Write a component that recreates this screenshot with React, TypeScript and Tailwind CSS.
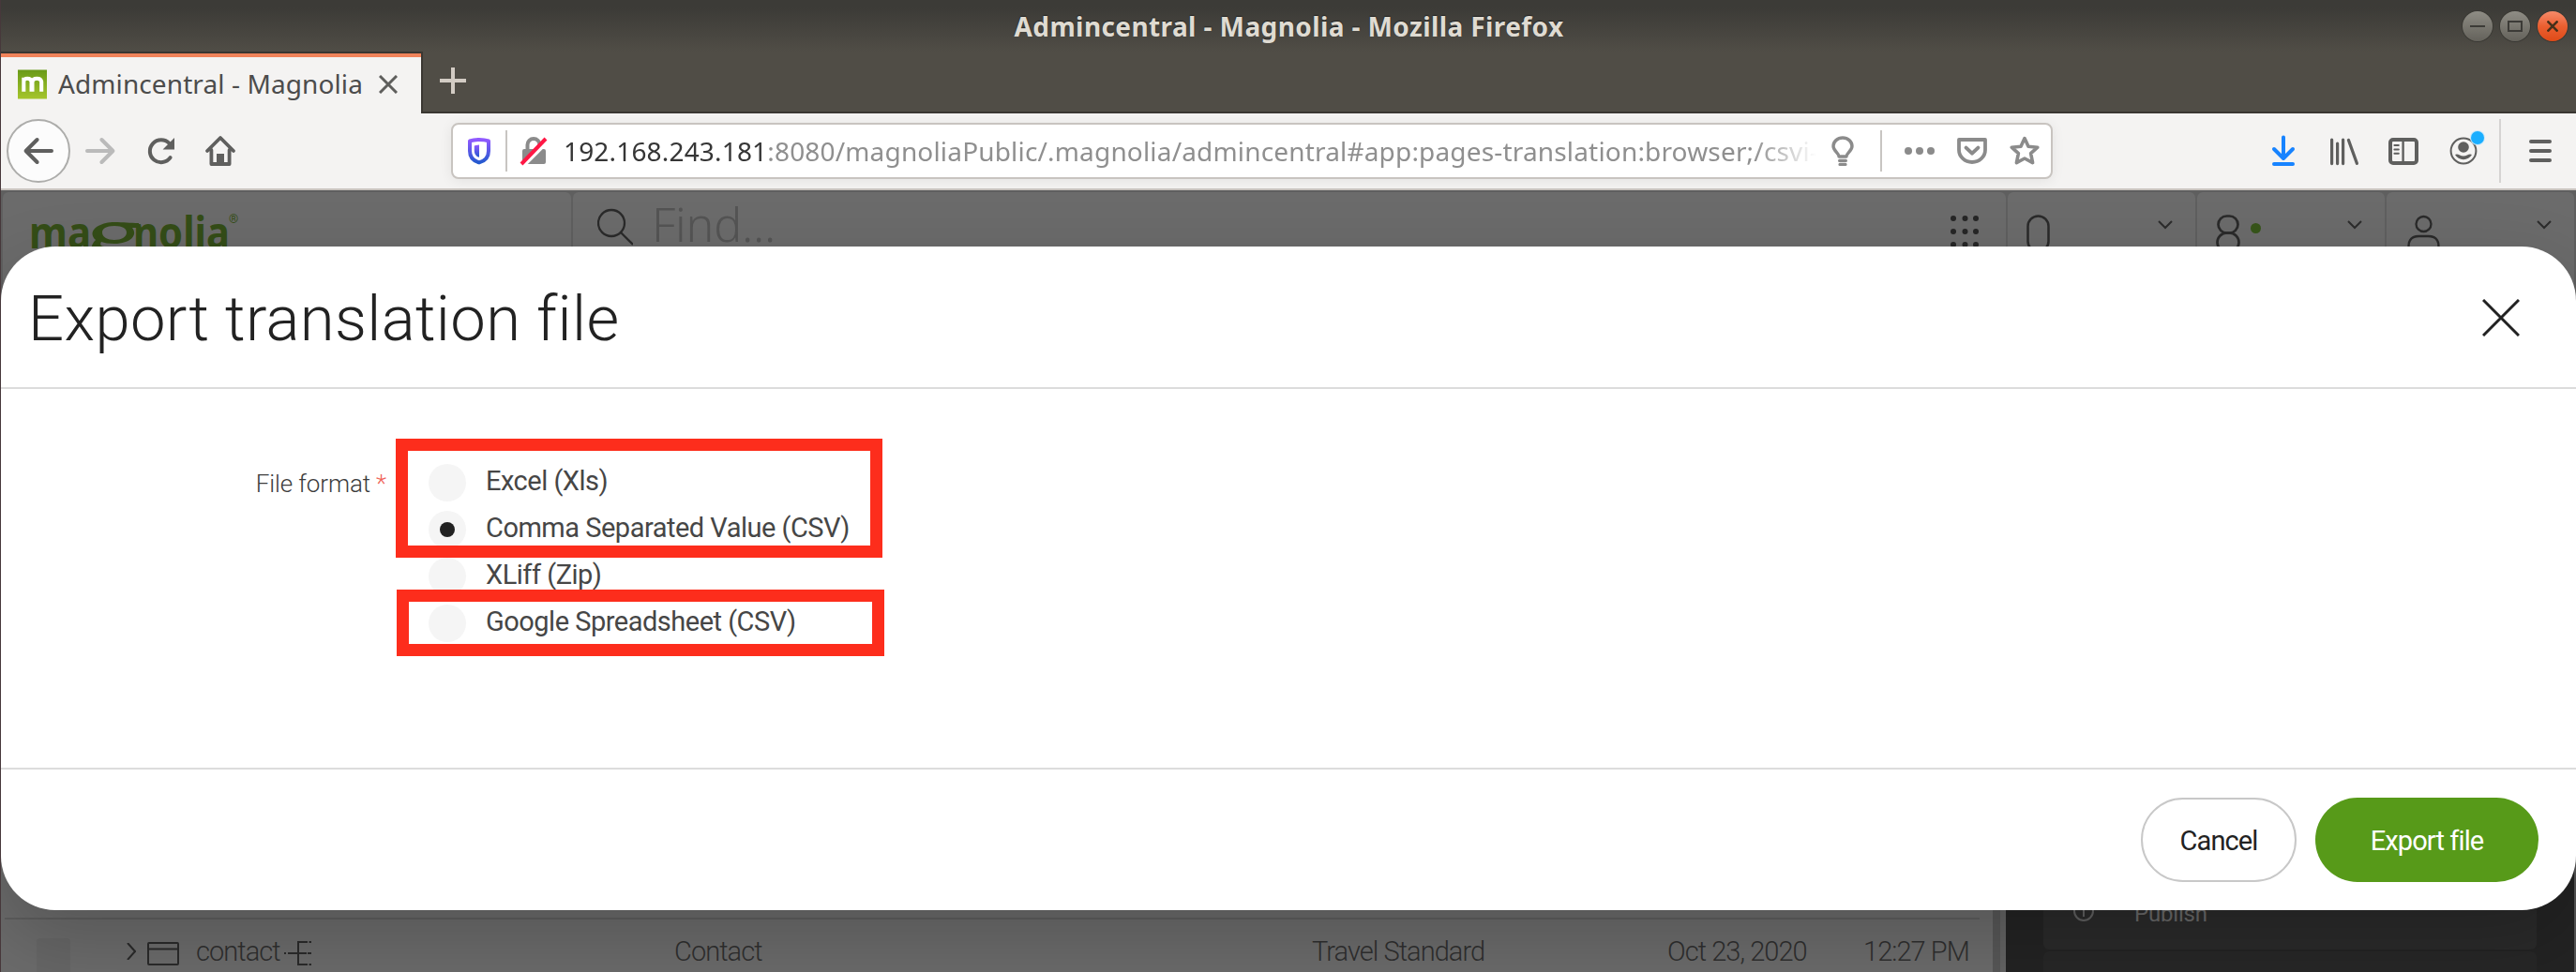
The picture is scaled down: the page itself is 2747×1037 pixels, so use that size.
import React from 'react';

type IconProps = { children: React.ReactNode; className?: string };

/* 16-unit toolbar icon drawn at 32px */
const Icon = ({ children, className = '' }: IconProps) => (
  <svg
    viewBox="0 0 16 16"
    fill="none"
    stroke="currentColor"
    strokeWidth="2"
    strokeLinecap="round"
    strokeLinejoin="round"
    className={`h-8 w-8 shrink-0 overflow-visible ${className}`}
  >
    {children}
  </svg>
);

const TitleBar = () => (
  <div className="flex h-[55px] shrink-0 items-center bg-gradient-to-b from-[#3c3b37] from-15% to-[#504d46]">
    <div className="flex-1" />
    <div className="pl-[10px] font-['Noto_Sans',sans-serif] text-[28px] leading-[52px] font-bold tracking-[0.4px] whitespace-nowrap text-[#dfdbd2] [text-shadow:0_-1px_1px_#222]">
      Admincentral - Magnolia - Mozilla Firefox
    </div>
    <div className="flex flex-1 justify-end gap-2 pr-[9px]">
      <div className="flex h-8 w-8 items-center justify-center rounded-full bg-gradient-to-b from-[#8f8d85] to-[#64625b] shadow-[0_0_0_1px_#3a3934]">
        <div className="mt-px h-[2px] w-4 bg-[#3c3b37]" />
      </div>
      <div className="flex h-8 w-8 items-center justify-center rounded-full bg-gradient-to-b from-[#8f8d85] to-[#64625b] shadow-[0_0_0_1px_#3a3934]">
        <div className="h-3 w-4 border-2 border-[#3c3b37]" />
      </div>
      <div className="flex h-8 w-8 items-center justify-center rounded-full bg-gradient-to-b from-[#f58a68] via-[#ea5f30] to-[#df4a16] shadow-[0_0_0_1px_#3a3934]">
        <svg viewBox="0 0 12 12" className="h-3 w-3" stroke="#46301a" strokeWidth="2.6">
          <path d="M.5.5l11 11M11.5.5l-11 11" />
        </svg>
      </div>
    </div>
  </div>
);

const TabStrip = () => (
  <div className="flex h-[66px] shrink-0 bg-[#504d46]">
    <div className="flex w-[450px] border-t-2 border-r-2 border-[#3a3732]">
      <div className="flex w-[448px] items-center border-t-4 border-[#f0835a] bg-[#f4f3f2] pl-[18px]">
        <svg viewBox="0 0 32 32" className="-mt-0.5 h-8 w-[31px] shrink-0">
          <defs>
            <linearGradient id="fav" x2="0" y2="1">
              <stop stopColor="#699a19" />
              <stop offset="1" stopColor="#a5c52c" />
            </linearGradient>
          </defs>
          <rect width="32" height="32" fill="url(#fav)" />
          <path
            d="M6.500 24V8.500M6.500 24V13q0-3.500 4-3.500t4.500 3.500V24M16 24V13q.5-3.500 5-3.500t5 3.500V24"
            fill="none"
            stroke="#fff"
            strokeWidth="4.200"
          />
        </svg>
        <span className="mb-[5px] ml-3 font-['Noto_Sans',sans-serif] text-[28px] leading-[40px] tracking-[0.1px] whitespace-nowrap text-[#4c4c4c]">
          Admincentral - Magnolia
        </span>
        <svg viewBox="0 0 20 20" className="mb-0.5 ml-[17px] h-5 w-5 shrink-0" stroke="#5e5e5c" strokeWidth="3">
          <path d="M1 1l18 18M19 1L1 19" />
        </svg>
      </div>
    </div>
    <div className="flex flex-1 items-center border-b-2 border-[#3a3732] pl-[18px]">
      <svg viewBox="0 0 28 28" className="mb-0.5 h-7 w-7" stroke="#d3ccc4" strokeWidth="4">
        <path d="M14 0v28M0 14h28" />
      </svg>
    </div>
  </div>
);

const AddressBar = () => (
  <div className="ml-[230px] flex h-[60px] w-[1708px] shrink-0 items-center rounded-lg border-2 border-[#c8c4c0] bg-white text-[#8b8b8b] shadow-[0_2px_14px_rgba(0,0,0,0.07)]">
    <svg viewBox="0 0 16 16" className="ml-3 h-8 w-8 shrink-0" fill="none">
      <defs>
        <linearGradient id="shield" x2="0" y2="1">
          <stop stopColor="#9059ff" />
          <stop offset="1" stopColor="#2459cf" />
        </linearGradient>
      </defs>
      <path
        d="M8 2c2 0 3.800.3 5 .7V8c0 3.500-2 5.400-5 6.200C5 13.400 3 11.500 3 8V2.700C4.200 2.300 6 2 8 2z"
        stroke="url(#shield)"
        strokeWidth="2"
        strokeLinejoin="round"
      />
      <path d="M8 4.800v6.600C6.200 10.700 5.400 9.700 5.400 8V5.200Q6.500 4.900 8 4.800z" fill="url(#shield)" />
    </svg>
    <div className="ml-3 h-11 w-0.5 bg-[#c8c5c2]" />
    <svg viewBox="0 0 32 32" className="ml-3 h-8 w-8 shrink-0" fill="none">
      <path d="M9.500 15V9.500a6.500 6.500 0 0 1 13 0V15" stroke="#8b8b8b" strokeWidth="4" />
      <rect x="4" y="14" width="25" height="16" rx="2" fill="#8b8b8b" />
      <path d="M6 31L33 4" stroke="#fff" strokeWidth="4" />
      <path d="M3 30L29 3" stroke="#ff1744" strokeWidth="4" />
    </svg>
    <div className="ml-4 w-[1336px] overflow-hidden font-['Noto_Sans',sans-serif] text-[28px] leading-[40px] tracking-[0.17px] whitespace-nowrap text-[#8f8f8f] [mask-image:linear-gradient(to_right,#000_95%,transparent_100%)]">
      <span className="text-[#363636]">192.168.243.181</span>
      :8080/magnoliaPublic/.magnolia/admincentral#app:pages-translation:browser;/csvi-
    </div>
    <Icon className="ml-3">
      <path d="M6 11c0-1.800-3-3-3-5.500C3 3 5.200 1 8 1s5 2 5 4.500C13 8 10 9.200 10 11z" strokeWidth="1.700" />
      <path d="M6.300 13.200h3.400M6.500 15.200h3" strokeWidth="1.600" />
    </Icon>
    <div className="ml-6 h-11 w-0.5 bg-[#c8c5c2]" />
    <svg viewBox="0 0 32 32" className="ml-6 h-8 w-8 shrink-0" fill="currentColor">
      <circle cx="4" cy="16" r="4" />
      <circle cx="16" cy="16" r="4" />
      <circle cx="28" cy="16" r="4" />
    </svg>
    <Icon className="ml-6">
      <path d="M1 2h14v5.500a7 6.500 0 0 1-14 0z" strokeWidth="1.900" />
      <path d="M4.800 6.300L8 9.300l3.200-3" />
    </Icon>
    <Icon className="ml-6">
      <path
        d="M8 1.300l2 4.300 4.900.5-3.600 3.200 1 5L8 12l-4.300 2.300 1-5L1.100 6.100 6 5.600z"
        strokeWidth="1.800"
      />
    </Icon>
  </div>
);

const Toolbar = () => (
  <div className="flex h-[82px] shrink-0 items-center border-b-2 border-[#c8c3be] bg-[#f4f3f2] pl-[6px] text-[#5f5f5e]">
    <div className="flex h-[68px] w-[68px] shrink-0 items-center justify-center rounded-full border-2 border-[#adadab] bg-[#fcfcfc]">
      <Icon>
        <path d="M15 8H1.500M7.300 2L1.300 8l6 6" />
      </Icon>
    </div>
    <Icon className="ml-4 text-[#bababa]">
      <path d="M1 8h13.500M8.700 2l6 6-6 6" />
    </Icon>
    <Icon className="ml-[33px]">
      <path d="M12.800 11.600A6 6 0 1 1 12.300 4" />
      <path d="M15 1v6.200H8.800z" fill="currentColor" stroke="none" />
    </Icon>
    <Icon className="ml-[31px]">
      <path d="M1 8l7-7 7 7M3.200 7.500V15h9.600V7.500" strokeWidth="1.900" />
      <path d="M6 15V9.500h4V15z" fill="currentColor" stroke="none" />
    </Icon>
    <AddressBar />
    <Icon className="ml-[230px] text-[#1783ff]">
      <path d="M8 .8v10.500M3 7l5 5 5-5M3 15h10" />
    </Icon>
    <Icon className="ml-[33px]">
      <path d="M1.300 2v12.800M4.300 4v10.800M7.300 2v12.800M10.200 2.200l4.500 12.500" strokeWidth="1.600" />
    </Icon>
    <Icon className="ml-[31px]">
      <rect x="1" y="2" width="14" height="12.500" rx="1.500" />
      <path d="M7.800 2v12.500" strokeWidth="1.200" />
      <path d="M3.200 5h2.200M3.200 7.200h2.200M3.200 9.400h2.200" strokeWidth="1" />
    </Icon>
    <div className="relative ml-8">
      <Icon>
        <circle cx="8" cy="8" r="6.700" strokeWidth="1" />
        <circle cx="8" cy="6" r="2.900" fill="currentColor" stroke="none" />
        <path d="M3.500 10c1.500-1 2.500.8 4.500.8s3-1.800 4.500-.8A5.200 5.200 0 0 1 3.500 10z" fill="currentColor" stroke="none" />
      </Icon>
      <div className="absolute -top-[5px] -right-[6px] h-3.5 w-3.5 rounded-full bg-[#1aaeff] shadow-[0_0_0_1px_#c9e8fb]" />
    </div>
    <div className="ml-[22px] h-[68px] w-0.5 bg-[#d6d4d2]" />
    <Icon className="ml-[26px]">
      <path d="M3 3h10M3 8h10M3 13h10" />
    </Icon>
  </div>
);

const Chevron = () => (
  <svg viewBox="0 0 16 10" className="mt-1.5 h-2.5 w-4" fill="none" stroke="#2c2c2c" strokeWidth="2">
    <path d="M1 1l7 7 7-7" />
  </svg>
);

const cell = 'flex items-start rounded-t-md bg-[#6b6b6b]';

const AppHeader = () => (
  <div className="flex h-[120px] shrink-0 gap-0.5 bg-[#5f5f5f] px-0.5 pt-0.5">
    <div className={`${cell} w-[606px]`}>
      <svg viewBox="0 0 230 50" className="mt-[18px] ml-[29px] h-[50px] w-[230px]" fill="#344d17">
        <g fontFamily="Noto Sans, sans-serif" fontWeight="700" fontSize="46">
          <text x="-1" y="42" textLength="66" lengthAdjust="spacingAndGlyphs">ma</text>
          <text x="110" y="42" textLength="103" lengthAdjust="spacingAndGlyphs">nolia</text>
        </g>
        <text x="212" y="15" fontFamily="Roboto, sans-serif" fontSize="13">®</text>
        <path
          fillRule="evenodd"
          d="M90 14c10 0 16 1 26 1v5h-7c7 9-4 17-19 17-6 0-11-1-14-2-2 3 0 5 3 5h18v6H72c-8 0-8-7-2-13-10-9 3-19 20-19zm0 4c-9 0-13 3-13 7s4 8 13 8 13-4 13-8-4-7-13-7z"
        />
      </svg>
    </div>
    <div className={`${cell} flex-1 pl-[26px]`}>
      <svg viewBox="0 0 38 40" className="mt-[17px] h-10 w-[38px]" fill="none" stroke="#2a2a2a" strokeWidth="2.300">
        <circle cx="15" cy="16" r="14" />
        <path d="M25 26l13 13" />
      </svg>
      <span className="mt-[4px] ml-5 font-['Noto_Sans',sans-serif] text-[50px] leading-[60px] font-light tracking-[-0.2px] text-[#545454]">
        Find...
      </span>
      <svg viewBox="0 0 30 36" className="mt-6 mr-[29px] ml-auto h-9 w-[30px]" fill="#262626">
        {[3, 17, 31].map((y) => [3, 15.5, 27].map((x) => <circle key={`${x}-${y}`} cx={x} cy={y + 1} r="3" />))}
      </svg>
    </div>
    <div className={`${cell} w-[200px] justify-between pt-6 pr-6 pl-5`}>
      <svg viewBox="0 0 26 44" className="h-11 w-[26px]" fill="none" stroke="#2a2a2a" strokeWidth="2.500">
        <rect x="1.500" y="1.500" width="22" height="38" rx="11" />
      </svg>
      <Chevron />
    </div>
    <div className={`${cell} w-[200px] pt-6 pr-6 pl-5`}>
      <svg viewBox="0 0 26 44" className="h-11 w-[26px]" fill="none" stroke="#2a2a2a" strokeWidth="2.700">
        <rect x="2.500" y="1.500" width="21" height="18" rx="9" />
        <rect x="1.500" y="19.500" width="23" height="20" rx="10" />
      </svg>
      <div className="mt-[9px] ml-[11px] h-[11px] w-[11px] rounded-full bg-[#37551a]" />
      <div className="ml-auto">
        <Chevron />
      </div>
    </div>
    <div className={`${cell} w-[200px] justify-between pt-6 pr-6 pl-[22px]`}>
      <svg viewBox="0 0 36 44" className="h-11 w-9" fill="none" stroke="#2a2a2a" strokeWidth="2.300">
        <circle cx="17.500" cy="10" r="8" />
        <path d="M1.500 44V34q0-11 11-11h10q11 0 11 11v10" />
      </svg>
      <Chevron />
    </div>
  </div>
);

const AppBody = () => (
  <div className="flex h-[714px] shrink-0 bg-[#6b6b6b] font-['Roboto',sans-serif]">
    <div className="w-[2124px] pt-[656px]">
      <div className="mr-[14px] ml-1 h-0.5 bg-[#5e5e5e]" />
      <div className="flex h-[68px] items-center text-[29px] leading-[40px] font-light tracking-[-0.95px] whitespace-nowrap text-[#2f2f2f]">
        <div className="mt-5 ml-[38px] w-9 self-start rounded-sm bg-[#666] pt-12" />
        <svg viewBox="0 0 10 18" className="ml-[60px] h-[18px] w-2.5" fill="none" stroke="#2a2a2a" strokeWidth="2">
          <path d="M1 0l8 9-8 9" />
        </svg>
        <svg viewBox="0 0 34 25" className="mt-1 ml-3 h-[25px] w-[34px]" fill="none" stroke="#2a2a2a" strokeWidth="2">
          <rect x="1" y="1" width="32" height="23" rx="1" />
          <path d="M1 7.500h32" />
        </svg>
        <span className="ml-[18px] w-[94px]">contact</span>
        <svg viewBox="0 0 30 28" className="mt-1 h-7 w-[30px]" fill="none" stroke="#2a2a2a" strokeWidth="2">
          <path d="M0 14h2M4 14h20M25 14h4M25 2H15v24h10M26.500 2h2.500M26.500 26h2.500" />
        </svg>
        <span className="ml-[386px] w-[680px]">Contact</span>
        <span className="w-[379px]">Travel Standard</span>
        <span className="w-[209px]">Oct 23, 2020</span>
        <span>12:27 PM</span>
      </div>
    </div>
    <div className="w-2 bg-[#575757]" />
    <div className="w-1.5 bg-[#636363]" />
    <div className="flex flex-1 flex-col gap-0.5 border-r-2 border-[#555] bg-[#232323] pt-[590px] pr-10 pl-10">
      <div className="flex h-[100px] shrink-0 items-center rounded-md bg-[#2a2a2a] pl-8">
        <svg viewBox="0 0 22 24" className="mt-[17px] h-6 w-[22px]" fill="none" stroke="#606060" strokeWidth="2">
          <circle cx="11" cy="12" r="10" />
          <path d="M11 6v12" />
        </svg>
        <span className="mt-[23px] ml-[43px] text-[24px] leading-[30px] tracking-[-0.2px] text-[#686868]">Publish</span>
      </div>
      <div className="h-[60px] shrink-0 rounded-md bg-[#272727]" />
    </div>
  </div>
);

const formats = [
  { label: 'Excel (Xls)', checked: false },
  { label: 'Comma Separated Value (CSV)', checked: true },
  { label: 'XLiff (Zip)', checked: false },
  { label: 'Google Spreadsheet (CSV)', checked: false },
];

const ExportDialog = () => (
  <div className="absolute inset-x-0 top-[60px] flex h-[708px] flex-col rounded-[58px] bg-white font-['Roboto',sans-serif] shadow-[0_30px_80px_rgba(0,0,0,0.2)]">
    <div className="flex h-[152px] items-center justify-between border-b-2 border-[#dcdcdc] pr-[60px] pl-[29px]">
      <h1 className="pt-1 text-[67px] leading-[80px] font-light tracking-[0.35px] text-[#222]">Export translation file</h1>
      <svg viewBox="0 0 40 40" className="mt-0.5 h-10 w-10" stroke="#222" strokeWidth="3">
        <path d="M1 1l38 38M39 1L1 39" />
      </svg>
    </div>
    <div className="relative flex flex-1 pt-[75px]">
      <div className="flex h-[52px] w-[411px] items-center justify-end gap-[6px] text-[26px] leading-none font-light tracking-[-0.1px] text-[#3c3c3c]">
        <span>File format</span>
        <span className="text-[#f0645a]">*</span>
      </div>
      <div className="ml-[45px] flex flex-col">
        {formats.map((f) => (
          <label key={f.label} className="flex h-[50px] items-center gap-[21px]">
            <span className="flex h-10 w-10 items-center justify-center rounded-full bg-[#f5f5f5]">
              {f.checked && <span className="h-4 w-4 rounded-full bg-[#222]" />}
            </span>
            <span className="mb-1 text-[29px] leading-[40px] tracking-[-0.5px] whitespace-nowrap text-[#464646]">{f.label}</span>
          </label>
        ))}
      </div>
      <div className="absolute top-[53px] left-[421px] h-[127px] w-[519px] border-[13px] border-[#fd2d1c]" />
      <div className="absolute top-[214px] left-[422px] h-[71px] w-[520px] border-[13px] border-[#fd2d1c]" />
    </div>
    <div className="flex h-[152px] items-center justify-end gap-5 border-t-2 border-[#dcdcdc] pr-10 text-[29px] tracking-[-0.9px]">
      <button className="h-[90px] w-[166px] rounded-full border-2 border-[#c8c8c8] pt-[3px] text-[#222]">Cancel</button>
      <button className="h-[90px] w-[238px] rounded-full bg-[#579a19] pt-[3px] text-white">Export file</button>
    </div>
  </div>
);

export default function App() {
  return (
    <div className="flex h-[1037px] w-[2747px] flex-col overflow-hidden border-l border-[#47383b] bg-[#6b6b6b]">
      <TitleBar />
      <TabStrip />
      <Toolbar />
      <div className="relative flex h-[834px] shrink-0 flex-col overflow-hidden">
        <AppHeader />
        <AppBody />
        <ExportDialog />
      </div>
    </div>
  );
}
